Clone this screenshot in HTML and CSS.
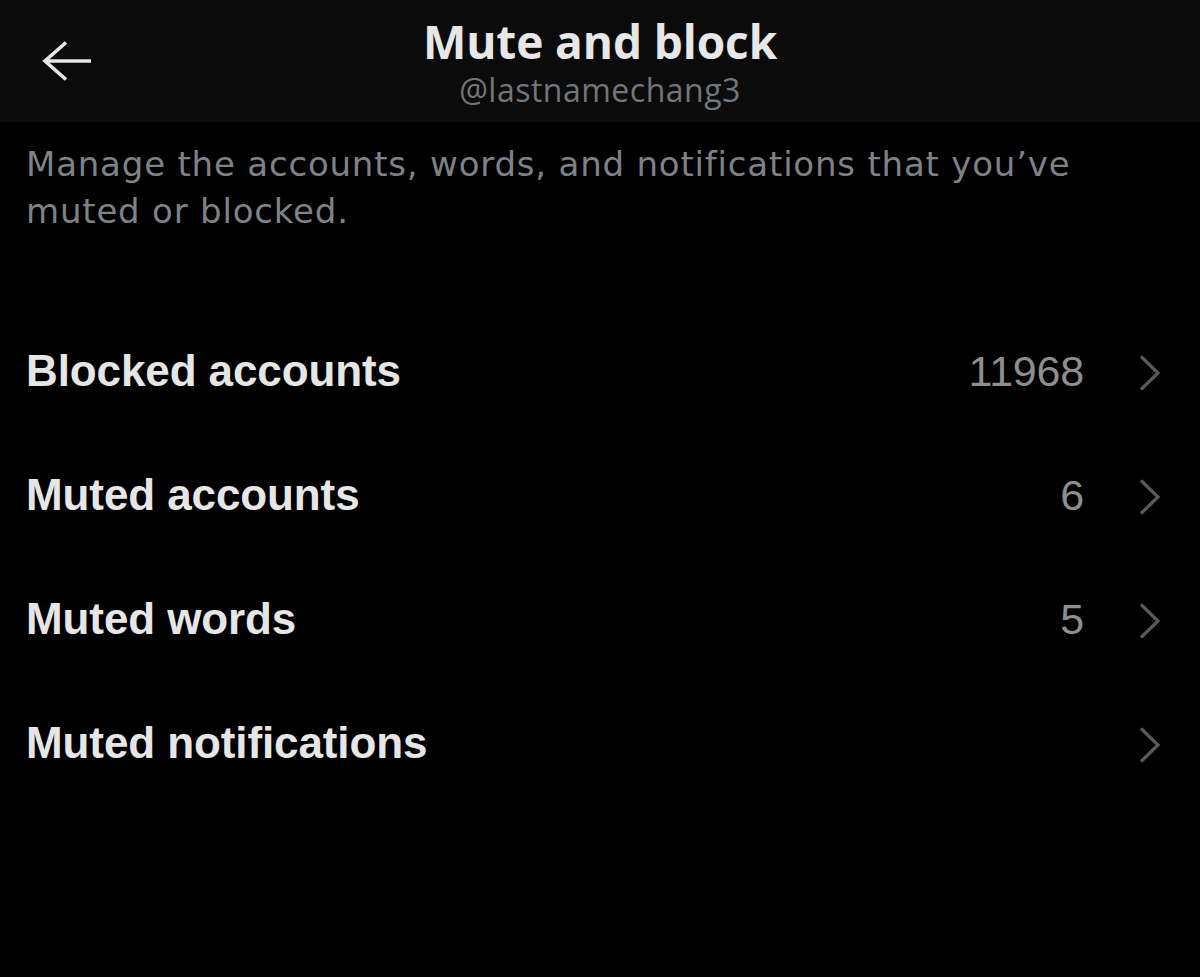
FILE: index.html
```html
<!DOCTYPE html>
<html lang="en">
<head>
<meta charset="utf-8">
<title>Mute and block</title>
<link rel="stylesheet" href="styles.css">
</head>
<body>
<header class="topbar">
  <div class="back">
    <svg class="back-icon" width="52" height="44" viewBox="0 0 52 44" aria-hidden="true">
      <path d="M3 22 H50 M25 3.5 L4 22 L25 40.5" fill="none" stroke="#e6e6e6" stroke-width="3.6" stroke-linejoin="miter"/>
    </svg>
  </div>
  <div class="titles">
    <h1 class="title">Mute and block</h1>
    <div class="handle">@lastnamechang3</div>
  </div>
  <div class="spacer"></div>
</header>
<main class="content">
  <p class="desc">Manage the accounts, words, and notifications that you’ve muted or blocked.</p>
  <ul class="menu">
    <li class="row"><span class="label">Blocked accounts</span><span class="count">11968</span><svg class="chev" width="24" height="36" viewBox="0 0 24 36" aria-hidden="true"><path d="M3 1.5 L20 18 L3 34.5" fill="none" stroke="#5a5a5a" stroke-width="3.2"/></svg></li>
    <li class="row"><span class="label">Muted accounts</span><span class="count">6</span><svg class="chev" width="24" height="36" viewBox="0 0 24 36" aria-hidden="true"><path d="M3 1.5 L20 18 L3 34.5" fill="none" stroke="#5a5a5a" stroke-width="3.2"/></svg></li>
    <li class="row"><span class="label">Muted words</span><span class="count">5</span><svg class="chev" width="24" height="36" viewBox="0 0 24 36" aria-hidden="true"><path d="M3 1.5 L20 18 L3 34.5" fill="none" stroke="#5a5a5a" stroke-width="3.2"/></svg></li>
    <li class="row"><span class="label">Muted notifications</span><span class="count"></span><svg class="chev" width="24" height="36" viewBox="0 0 24 36" aria-hidden="true"><path d="M3 1.5 L20 18 L3 34.5" fill="none" stroke="#5a5a5a" stroke-width="3.2"/></svg></li>
  </ul>
</main>
</body>
</html>
```
FILE: styles.css
```css
* { box-sizing: border-box; }
html, body {
  margin: 0;
  padding: 0;
  background: #000;
  min-height: 100%;
}
body {
  font-family: "Liberation Sans", Arial, sans-serif;
  color: #e6e6e6;
  height: 977px;
  overflow: hidden;
}
.topbar {
  height: 122px;
  background: #0b0b0b;
  display: grid;
  grid-template-columns: 1fr auto 1fr;
  align-items: center;
}
.back {
  padding-left: 41px;
  display: flex;
  align-items: center;
}
.back-icon { display: block; }
.titles {
  display: flex;
  flex-direction: column;
  align-items: center;
  padding-top: 2px;
}
.title {
  margin: 0;
  font-family: "Open Sans", sans-serif;
  font-weight: 700;
  font-size: 46px;
  line-height: 52px;
  letter-spacing: -0.1px;
  color: #e7e7e7;
}
.handle {
  margin-top: 3px;
  font-family: "Open Sans", sans-serif;
  font-size: 32px;
  line-height: 40px;
  letter-spacing: 0.5px;
  color: #72767a;
}
.content {
  padding: 19px 0 0;
}
.desc {
  margin: 0;
  padding: 0 60px 0 26px;
  font-family: "DejaVu Sans", sans-serif;
  font-size: 34px;
  line-height: 47px;
  color: #7e8287;
  letter-spacing: 0.8px;
}
.menu {
  list-style: none;
  margin: 74px 0 0;
  padding: 0;
}
.row {
  height: 124px;
  display: flex;
  align-items: center;
  padding: 0 38px 0 26px;
}
.label {
  flex: 1;
  font-weight: 700;
  font-size: 44px;
  line-height: 52px;
  letter-spacing: -0.1px;
  color: #e6e6e6;
}
.count {
  font-size: 43px;
  line-height: 52px;
  color: #8e8e8e;
  letter-spacing: -0.2px;
}
.chev {
  display: block;
  margin-left: 54px;
  margin-top: 4px;
}
```
